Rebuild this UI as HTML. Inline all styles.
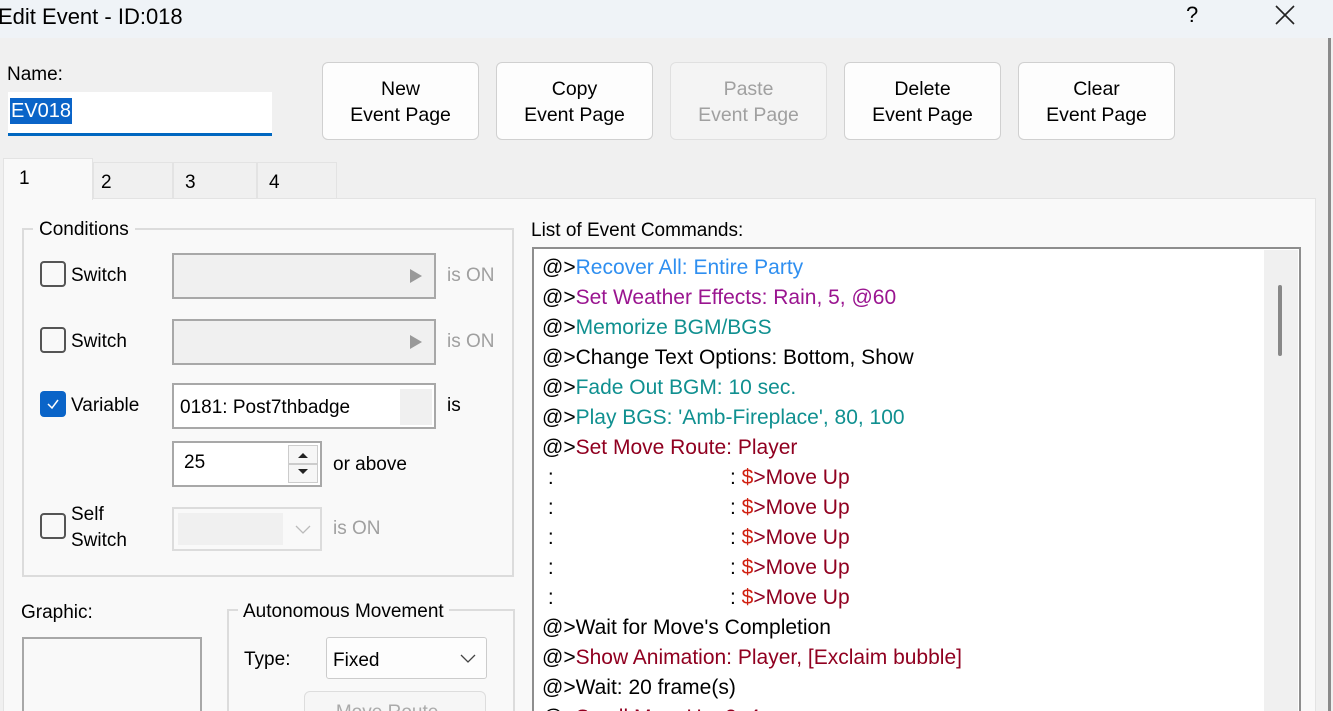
<!DOCTYPE html>
<html><head><meta charset="utf-8"><style>
*{box-sizing:border-box;margin:0;padding:0}
html,body{width:1333px;height:711px;overflow:hidden}
body{background:#f0f0f0;font-family:"Liberation Sans",Arial,sans-serif;font-size:19px;color:#000;position:relative}
.a{position:absolute;white-space:nowrap}
.btn{position:absolute;top:62px;width:157px;height:78px;border:1px solid #d0d0d0;border-radius:6px;background:#fdfdfd;text-align:center;line-height:26px;padding-top:13px;font-size:19.5px}
.cb{position:absolute;width:26px;height:26px;border:2px solid #555;border-radius:4px;background:#f9f9f9}
.fld{position:absolute;border:2px solid #a8a8a8;background:#f0f0f0}
.gray{color:#a0a0a0}
.line{position:absolute;left:542px;height:30px;line-height:30px;font-size:21px;white-space:nowrap}
.mv{position:absolute;left:188px;top:0;white-space:nowrap}
</style></head><body>
<div class="a" style="left:0;top:0;width:1333px;height:38px;background:#eff3f7"></div>
<div class="a" style="left:-2px;top:4px;font-size:22px">Edit Event - ID:018</div>
<div class="a" style="left:1186px;top:2px;font-size:22px">?</div>
<svg class="a" style="left:1274px;top:4px" width="22" height="22"><path d="M2 2L20 20M20 2L2 20" stroke="#222" stroke-width="1.6"/></svg>
<div class="a" style="left:1328px;top:38px;width:3px;height:673px;background:#8a8a8a"></div>

<div class="a" style="left:7px;top:64px">Name:</div>
<div class="a" style="left:8px;top:92px;width:264px;height:44px;background:#fff;border-bottom:3px solid #0067c0"></div>
<div class="a" style="left:10px;top:98px;height:26px;background:#0a64c8;color:#fff;line-height:26px;padding:0 1px;font-size:20px">EV018</div>

<div class="btn" style="left:322px">New<br>Event Page</div>
<div class="btn" style="left:496px">Copy<br>Event Page</div>
<div class="btn" style="left:670px;background:#f4f4f4;color:#a0a0a0;border-color:#e0e0e0">Paste<br>Event Page</div>
<div class="btn" style="left:844px">Delete<br>Event Page</div>
<div class="btn" style="left:1018px">Clear<br>Event Page</div>

<div class="a" style="left:3px;top:198px;width:1313px;height:520px;background:#f9f9f9;border:1px solid #e3e3e3"></div>
<div class="a" style="left:93px;top:162px;width:80px;height:37px;border:1px solid #e3e3e3;background:#f0f0f0"></div>
<div class="a" style="left:173px;top:162px;width:84px;height:37px;border:1px solid #e3e3e3;background:#f0f0f0"></div>
<div class="a" style="left:257px;top:162px;width:80px;height:37px;border:1px solid #e3e3e3;background:#f0f0f0"></div>
<div class="a" style="left:3px;top:158px;width:90px;height:42px;border:1px solid #e3e3e3;border-bottom:none;background:#f9f9f9"></div>
<div class="a" style="left:19px;top:168px">1</div>
<div class="a" style="left:101px;top:172px">2</div>
<div class="a" style="left:185px;top:172px">3</div>
<div class="a" style="left:269px;top:172px">4</div>

<div class="a" style="left:22px;top:228px;width:492px;height:349px;border:2px solid #dcdcdc"></div>
<div class="a" style="left:33px;top:219px;background:#f9f9f9;padding:0 6px">Conditions</div>

<div class="cb" style="left:40px;top:261px"></div><div class="a" style="left:71px;top:265px">Switch</div>
<div class="fld" style="left:172px;top:253px;width:264px;height:46px"></div>
<svg class="a" style="left:409px;top:268px" width="14" height="16"><path d="M1 1L13 8L1 15Z" fill="#999"/></svg>
<div class="a gray" style="left:447px;top:265px">is ON</div>

<div class="cb" style="left:40px;top:327px"></div><div class="a" style="left:71px;top:331px">Switch</div>
<div class="fld" style="left:172px;top:319px;width:264px;height:46px"></div>
<svg class="a" style="left:409px;top:334px" width="14" height="16"><path d="M1 1L13 8L1 15Z" fill="#999"/></svg>
<div class="a gray" style="left:447px;top:331px">is ON</div>

<div class="a" style="left:40px;top:391px;width:26px;height:26px;border-radius:4px;background:#0a64c8"></div>
<svg class="a" style="left:44px;top:395px" width="18" height="18"><path d="M4 9L8 13L14 5" stroke="#fff" stroke-width="1.5" fill="none"/></svg>
<div class="a" style="left:71px;top:395px">Variable</div>
<div class="fld" style="left:172px;top:383px;width:264px;height:46px;background:#fff"></div>
<div class="a" style="left:400px;top:389px;width:32px;height:36px;background:#f0f0f0"></div>
<div class="a" style="left:180px;top:397px">0181: Post7thbadge</div>
<div class="a" style="left:447px;top:395px">is</div>

<div class="fld" style="left:172px;top:441px;width:150px;height:46px;background:#fff"></div>
<div class="a" style="left:184px;top:452px">25</div>
<div class="a" style="left:288px;top:445px;width:30px;height:19px;border:1px solid #ccc;background:#f6f6f6"></div>
<div class="a" style="left:288px;top:464px;width:30px;height:19px;border:1px solid #ccc;background:#f6f6f6"></div>
<svg class="a" style="left:296px;top:449px" width="14" height="30"><path d="M2 9L7 4L12 9Z M2 20L7 25L12 20Z" fill="#222"/></svg>
<div class="a" style="left:333px;top:454px">or above</div>

<div class="cb" style="left:40px;top:513px"></div>
<div class="a" style="left:71px;top:502px;line-height:26px">Self<br>Switch</div>
<div class="fld" style="left:172px;top:507px;width:150px;height:44px;border-color:#dcdcdc;background:#f9f9f9"></div>
<div class="a" style="left:178px;top:513px;width:105px;height:32px;background:#f0f0f0"></div>
<svg class="a" style="left:294px;top:523px" width="18" height="12"><path d="M2 3L9 10L16 3" stroke="#bbb" stroke-width="1.3" fill="none"/></svg>
<div class="a gray" style="left:333px;top:518px">is ON</div>

<div class="a" style="left:21px;top:602px">Graphic:</div>
<div class="a" style="left:22px;top:637px;width:180px;height:90px;border:2px solid #a8a8a8;background:#f9f9f9"></div>

<div class="a" style="left:227px;top:609px;width:288px;height:120px;border:2px solid #dcdcdc"></div>
<div class="a" style="left:238px;top:601px;background:#f9f9f9;padding:0 5px">Autonomous Movement</div>
<div class="a" style="left:244px;top:649px">Type:</div>
<div class="a" style="left:326px;top:637px;width:161px;height:42px;border:1px solid #ccc;border-radius:3px;background:#fdfdfd"></div>
<div class="a" style="left:333px;top:650px">Fixed</div>
<svg class="a" style="left:459px;top:652px" width="18" height="12"><path d="M2 3L9 10L16 3" stroke="#444" stroke-width="1.3" fill="none"/></svg>
<div class="a" style="left:304px;top:691px;width:182px;height:40px;border:1px solid #ddd;border-radius:6px;background:#f6f6f6;color:#aaa;text-align:center;padding-top:10px">Move Route...</div>

<div class="a" style="left:531px;top:220px">List of Event Commands:</div>
<div class="a" style="left:532px;top:247px;width:769px;height:470px;border:2px solid #8e8e8e;background:#fff"></div>
<div class="a" style="left:1264px;top:250px;width:34px;height:470px;background:#f0f0f0"></div>
<div class="a" style="left:1278px;top:285px;width:4px;height:71px;background:#888;border-radius:2px"></div>

<div class="line" style="top:253px">@&gt;<span style="color:#2f8ff0">Recover All: Entire Party</span></div>
<div class="line" style="top:283px">@&gt;<span style="color:#9a1590">Set Weather Effects: Rain, 5, @60</span></div>
<div class="line" style="top:313px">@&gt;<span style="color:#109090">Memorize BGM/BGS</span></div>
<div class="line" style="top:343px">@&gt;Change Text Options: Bottom, Show</div>
<div class="line" style="top:373px">@&gt;<span style="color:#109090">Fade Out BGM: 10 sec.</span></div>
<div class="line" style="top:403px">@&gt;<span style="color:#109090">Play BGS: 'Amb-Fireplace', 80, 100</span></div>
<div class="line" style="top:433px">@&gt;<span style="color:#900020">Set Move Route: Player</span></div>
<div class="line" style="top:463px">&nbsp;:<span class="mv">: <span style="color:#d02010">$</span><span style="color:#900020">&gt;Move Up</span></span></div>
<div class="line" style="top:493px">&nbsp;:<span class="mv">: <span style="color:#d02010">$</span><span style="color:#900020">&gt;Move Up</span></span></div>
<div class="line" style="top:523px">&nbsp;:<span class="mv">: <span style="color:#d02010">$</span><span style="color:#900020">&gt;Move Up</span></span></div>
<div class="line" style="top:553px">&nbsp;:<span class="mv">: <span style="color:#d02010">$</span><span style="color:#900020">&gt;Move Up</span></span></div>
<div class="line" style="top:583px">&nbsp;:<span class="mv">: <span style="color:#d02010">$</span><span style="color:#900020">&gt;Move Up</span></span></div>
<div class="line" style="top:613px">@&gt;Wait for Move's Completion</div>
<div class="line" style="top:643px">@&gt;<span style="color:#900020">Show Animation: Player, [Exclaim bubble]</span></div>
<div class="line" style="top:673px">@&gt;Wait: 20 frame(s)</div>
<div class="line" style="top:703px">@&gt;<span style="color:#900020">Scroll Map: Up, 2, 4</span></div>
</body></html>
